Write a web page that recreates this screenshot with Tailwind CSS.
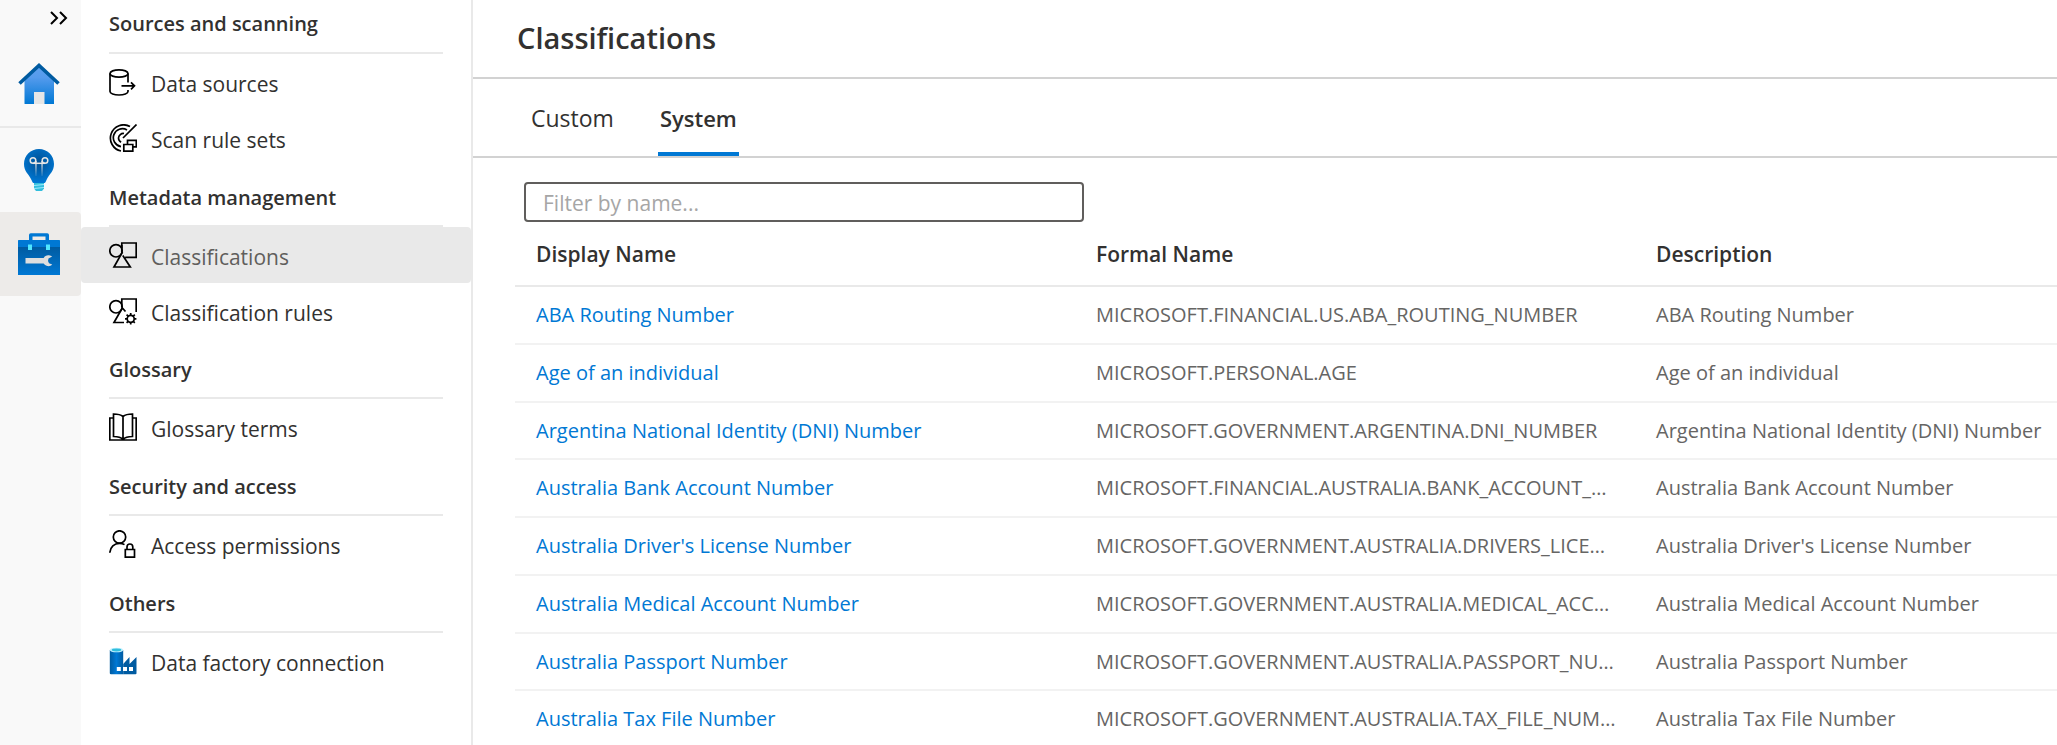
<!DOCTYPE html>
<html lang="en">
<head>
<meta charset="utf-8">
<title>Classifications</title>
<script src="https://cdn.jsdelivr.net/npm/@tailwindcss/browser@4"></script>
</head>
<body class="flex h-screen overflow-hidden bg-white font-['Open_Sans','Noto_Sans',sans-serif] text-[#323130]">

<!-- Icon rail -->
<nav aria-label="Hubs" class="flex w-[81px] shrink-0 flex-col bg-[#f9f9f9]">
  <button type="button" aria-label="Expand" class="flex h-[42px] items-start justify-end pt-[11px] pr-[13px]">
    <svg class="h-[14px] w-[18px]" viewBox="0 0 18 14" fill="none" stroke="#000" stroke-width="2"><path d="M1 1l6 6-6 6M10 1l6 6-6 6"/></svg>
  </button>
  <a href="#" aria-label="Home" class="flex h-[86px] justify-center border-b-2 border-[#e9e9e9] pt-[21px] pr-[3px]">
    <svg class="size-[42px]" viewBox="0 0 42 42"><defs><linearGradient id="home" x1="0" y1="0" x2="0" y2="1"><stop offset="0" stop-color="#5ea0ef"/><stop offset=".3" stop-color="#559bed"/><stop offset="1" stop-color="#0078d4"/></linearGradient></defs><path d="M21 3L36 17V40.500q0 .5-.5.5H7q-.5 0-.5-.5V17z" fill="url(#home)"/><path d="M16 29h10.500v12H16z" fill="#e6e6e6"/><path d="M1.500 20.500L21 2.500l19.500 18" fill="none" stroke="#005ba1" stroke-width="3.600"/></svg>
  </a>
  <a href="#" aria-label="Insights" class="flex h-[84px] justify-center pt-[21px] pr-[3px]">
    <svg class="size-[42px]" viewBox="0 0 42 42"><defs><radialGradient id="bulb" cx=".5" cy=".4" r=".6"><stop offset="0" stop-color="#004f92"/><stop offset="1" stop-color="#0078d4"/></radialGradient><linearGradient id="fil" x1="0" y1="0" x2="0" y2="1"><stop offset="0" stop-color="#e6e6e6"/><stop offset="1" stop-color="#e6e6e6" stop-opacity=".1"/></linearGradient></defs><path d="M36 15C36 6.500 29.300 0 21 0S6 6.500 6 15c0 7.500 4.500 9.500 7.500 16 .6 1.300 1.200 3 2 3h11c.8 0 1.400-1.700 2-3C31.500 24.500 36 22.500 36 15z" fill="url(#bulb)"/><g fill="none" stroke="#e6e6e6" stroke-width="1.500"><circle cx="15" cy="11.500" r="2.800"/><circle cx="27" cy="11.500" r="2.800"/><path d="M15 14.300h12"/></g><path d="M17.200 12h1.500v15h-1.500zM23.300 12h1.500v15h-1.500z" fill="url(#fil)"/><path d="M16 34h10v5.500L24 42h-6l-2-2.500z" fill="#32bedd"/><path d="M16 36.500l10-1M16 39.500l10-1" stroke="#9cebff"/></svg>
  </a>
  <a href="#" aria-label="Management" aria-current="page" class="flex h-[84px] justify-center rounded-r-sm bg-[#edebe9] pt-[21px] pr-[3px]">
    <svg class="size-[42px]" viewBox="0 0 42 42"><defs><linearGradient id="box" x1="0" y1="0" x2="0" y2="1"><stop offset="0" stop-color="#005ba1"/><stop offset="1" stop-color="#0078d4"/></linearGradient></defs><path d="M11 8V2q0-1.800 1.800-1.800h16.400Q31 .2 31 2v6h-3.500V3.500h-13V8z" fill="#0078d4"/><path d="M0 14h42v27.500q0 .5-.5.500H.5q-.5 0-.5-.5z" fill="url(#box)"/><path d="M0 7.500Q0 7 .5 7h41q.5 0 .5.500V14H0z" fill="#0078d4"/><path d="M10 11.500h4V17h-4zM28 11.500h4V17h-4z" fill="#50e6ff"/><path d="M7.500 25h18.200c1-2 3-3 5.300-2.700 1.300.1 2.300.6 3.200 1.300l-3.700 1.900-.5 2.500 1 2.200 3.200 1.300c-1.300 1.400-3 1.900-5 1.500-1.600-.4-2.800-1.300-3.600-2.500H7.500z" fill="#dedede"/></svg>
  </a>
</nav>

<!-- Section menu -->
<nav aria-label="Management" class="w-[392px] shrink-0 overflow-hidden border-r-2 border-[#e9e9e9] text-[21px] leading-[28px] [&_span]:pt-[3px]">
  <section>
    <h2 class="mx-7 flex h-[54px] items-center border-b-2 border-[#e9e9e9] pb-1 text-[20px] font-semibold">Sources and scanning</h2>
    <a href="#" class="flex h-14 items-center gap-[14px] px-7">
      <svg class="size-7 shrink-0" viewBox="0 0 28 28" fill="none" stroke="#000" stroke-width="1.700"><ellipse cx="10" cy="5.500" rx="9" ry="3.700"/><path d="M1 5.500v18c0 2 4 3.500 9 3.500s9-1.500 9-3.500V22M19 5.500v9M12.500 17.800h12.800M22 14.300l3.500 3.500-3.500 3.500"/></svg>
      <span>Data sources</span></a>
    <a href="#" class="flex h-14 items-center gap-[14px] px-7">
      <svg class="size-7 shrink-0" viewBox="0 0 28 28" fill="none" stroke="#000" stroke-width="1.700"><path d="M21 2.500A13.200 13.200 0 1 0 12 27M18 6A9 9 0 1 0 12 22.600M15 9.500A4.900 4.900 0 0 0 9.500 14c0 1.800 1 3.300 2.600 4.200M14 14L27.500 .5"/><path d="M14.800 20.500h9v6.700h-9zM18.500 20.500v-4.200h8.800v6.500h-3.500"/></svg>
      <span>Scan rule sets</span></a>
  </section>
  <section>
    <h2 class="mx-7 flex h-[61px] items-center border-b-2 border-[#e9e9e9] pt-1 text-[20px] font-semibold">Metadata management</h2>
    <a href="#" aria-current="page" class="flex h-14 items-center gap-[14px] rounded-sm bg-[#e9e9e9] px-7 text-[#605e5c]">
      <svg class="size-7 shrink-0" viewBox="0 0 28 28" fill="none" stroke="#000" stroke-width="1.700"><path d="M12.800 7V2h14.400v14.300h-11M13.800 14.500L21.300 26H5L13.500 11"/><circle cx="7" cy="9.800" r="6.200"/><path d="M12.800 4v7"/></svg>
      <span>Classifications</span></a>
    <a href="#" class="flex h-14 items-center gap-[14px] px-7">
      <svg class="size-7 shrink-0" viewBox="0 0 28 28" fill="none" stroke="#000" stroke-width="1.700"><path d="M12.800 10V2h14.400v13M16.500 14.500L13.300 11 5 25.500h10"/><circle cx="7" cy="9.800" r="6.200"/><circle cx="21.700" cy="21.800" r="3.500"/><path d="M21.700 16v2.300M21.700 25.300v2.300M16 21.800h2.200M25.200 21.800h2.200M17.600 17.700l1.700 1.700M24.100 24.200l1.700 1.700M25.800 17.700l-1.700 1.700M19.300 24.200l-1.700 1.700"/></svg>
      <span>Classification rules</span></a>
  </section>
  <section>
    <h2 class="mx-7 flex h-[60px] items-center border-b-2 border-[#e9e9e9] pt-1 text-[20px] font-semibold">Glossary</h2>
    <a href="#" class="flex h-14 items-center gap-[14px] px-7">
      <svg class="size-7 shrink-0" viewBox="0 0 28 28" fill="none" stroke="#000" stroke-width="1.700"><path d="M14 3.500C12 1.800 8 1 4.500 1v22.500c4 0 7.500.8 9.500 3 2-2.200 5.500-3 9.500-3V1C20 1 16 1.800 14 3.500zM14 3.500v23M4.500 5H.8v22h26.400V5h-3.700"/></svg>
      <span>Glossary terms</span></a>
  </section>
  <section>
    <h2 class="mx-7 flex h-[61px] items-center border-b-2 border-[#e9e9e9] pt-1 text-[20px] font-semibold">Security and access</h2>
    <a href="#" class="flex h-14 items-center gap-[14px] px-7">
      <svg class="size-7 shrink-0" viewBox="0 0 28 28" fill="none" stroke="#000" stroke-width="1.700"><circle cx="10.500" cy="7" r="6.200"/><path d="M.8 22.800c.4-6 4.500-9.500 9.700-9.500 2 0 3.700.5 5 1.300M16.300 19.500h9.200v7.700h-9.200zM18 19.500V17c0-4 5.800-4 5.800 0v2.500"/></svg>
      <span>Access permissions</span></a>
  </section>
  <section>
    <h2 class="mx-7 flex h-[61px] items-center border-b-2 border-[#e9e9e9] pt-1 text-[20px] font-semibold">Others</h2>
    <a href="#" class="flex h-14 items-center gap-[14px] px-7">
      <svg class="size-7 shrink-0" viewBox="0 0 28 28"><defs><linearGradient id="fac" x1="0" y1="0" x2="1" y2="0"><stop offset="0" stop-color="#005ba1"/><stop offset=".5" stop-color="#0078d4"/><stop offset="1" stop-color="#005ba1"/></linearGradient></defs><path d="M.8 3h13.400v24.200H2q-1.200 0-1.200-1z" fill="url(#fac)"/><path d="M14.200 17l6.300-7v7l7-7v16.200q0 1-1 1H14.200z" fill="#005ba1"/><ellipse cx="7.500" cy="3" rx="6.700" ry="2.300" fill="#c3f1ff"/><ellipse cx="7.500" cy="3" rx="4.800" ry="1.400" fill="#32bedd"/><path d="M7.800 20h4v4h-4zM14 20h4v4h-4zM20 20h4v4h-4z" fill="#fff"/></svg>
      <span>Data factory connection</span></a>
  </section>
</nav>

<!-- Content -->
<main class="min-w-0 flex-1 overflow-hidden">
  <h1 class="flex h-[79px] items-center border-b-2 border-[#d2d2d2] pb-[2px] pl-[44px] text-[29px] font-semibold">Classifications</h1>
  <div role="tablist" class="flex h-[79px] border-b-2 border-[#d2d2d2] pl-[56px] text-[23px]">
    <button type="button" role="tab" aria-selected="false" class="mr-[42px] border-b-4 border-transparent px-[2px] pt-[6px]">Custom</button>
    <button type="button" role="tab" aria-selected="true" class="border-b-4 border-[#0078d4] px-[2px] pt-[6px] text-[22px] font-semibold">System</button>
  </div>
  <div class="pt-6 pl-[42px]">
    <input type="text" aria-label="Filter by name" placeholder="Filter by name..." class="ml-[9px] block h-10 w-[560px] rounded-[4px] border-2 border-[#605e5c] pt-[2px] pl-[17px] text-[21px] placeholder:text-[#a6a6a6]">
    <table class="w-full table-fixed border-collapse text-[20px] leading-[28px]">
      <colgroup><col class="w-[560px]"><col class="w-[560px]"><col></colgroup>
      <thead>
        <tr class="h-[64px] border-b-2 border-[#e9e9e9] text-left text-[21px]">
          <th scope="col" class="pl-[21px] font-semibold">Display Name</th>
          <th scope="col" class="pl-[21px] font-semibold">Formal Name</th>
          <th scope="col" class="pl-[21px] font-semibold">Description</th>
        </tr>
      </thead>
      <tbody class="text-[#666564] [&_a]:text-[#0078d4] [&_td]:truncate [&_td]:pl-[21px] [&_td]:pr-[18px] [&_td:last-child]:pr-0 [&_tr]:h-[58px] [&_tr]:border-b-2 [&_tr]:border-[#f2f2f2] [&_tr:nth-child(4n+3)]:h-[57px]">
        <tr><td><a href="#">ABA Routing Number</a></td><td>MICROSOFT.FINANCIAL.US.ABA_ROUTING_NUMBER</td><td>ABA Routing Number</td></tr>
        <tr><td><a href="#">Age of an individual</a></td><td>MICROSOFT.PERSONAL.AGE</td><td>Age of an individual</td></tr>
        <tr><td><a href="#">Argentina National Identity (DNI) Number</a></td><td>MICROSOFT.GOVERNMENT.ARGENTINA.DNI_NUMBER</td><td>Argentina National Identity (DNI) Number</td></tr>
        <tr><td><a href="#">Australia Bank Account Number</a></td><td>MICROSOFT.FINANCIAL.AUSTRALIA.BANK_ACCOUNT_NUMBER</td><td>Australia Bank Account Number</td></tr>
        <tr><td><a href="#">Australia Driver's License Number</a></td><td>MICROSOFT.GOVERNMENT.AUSTRALIA.DRIVERS_LICENSE_NUMBER</td><td>Australia Driver's License Number</td></tr>
        <tr><td><a href="#">Australia Medical Account Number</a></td><td>MICROSOFT.GOVERNMENT.AUSTRALIA.MEDICAL_ACCOUNT_NUMBER</td><td>Australia Medical Account Number</td></tr>
        <tr><td><a href="#">Australia Passport Number</a></td><td>MICROSOFT.GOVERNMENT.AUSTRALIA.PASSPORT_NUMBER</td><td>Australia Passport Number</td></tr>
        <tr><td><a href="#">Australia Tax File Number</a></td><td>MICROSOFT.GOVERNMENT.AUSTRALIA.TAX_FILE_NUMBER</td><td>Australia Tax File Number</td></tr>
      </tbody>
    </table>
  </div>
</main>
</body>
</html>
